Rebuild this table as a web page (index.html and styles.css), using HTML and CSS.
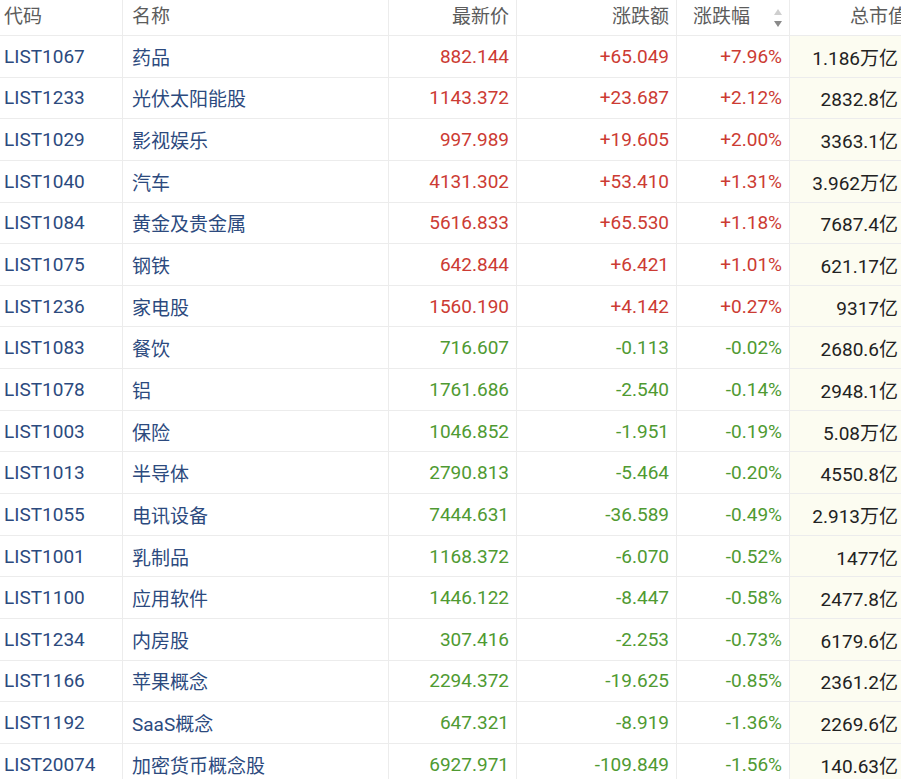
FILE: index.html
```html
<!DOCTYPE html>
<html lang="zh-CN">
<head>
<meta charset="utf-8">
<title>板块行情</title>
<link rel="stylesheet" href="styles.css">
</head>
<body>
<table class="quotes">
  <colgroup>
    <col class="c-code"><col class="c-name"><col class="c-price"><col class="c-chg"><col class="c-pct"><col class="c-cap">
  </colgroup>
  <thead>
    <tr>
      <th class="left">代码</th>
      <th class="left">名称</th>
      <th>最新价</th>
      <th>涨跌额</th>
      <th class="sorted"><span class="th-inner">涨跌幅<span class="sort"><span class="up"></span><span class="down"></span></span></span></th>
      <th class="cap-h">总市值</th>
    </tr>
  </thead>
  <tbody>
    <tr class="rise"><td class="code">LIST1067</td><td class="name">药品</td><td class="num">882.144</td><td class="num">+65.049</td><td class="num">+7.96%</td><td class="cap">1.186万亿</td></tr>
    <tr class="rise"><td class="code">LIST1233</td><td class="name">光伏太阳能股</td><td class="num">1143.372</td><td class="num">+23.687</td><td class="num">+2.12%</td><td class="cap">2832.8亿</td></tr>
    <tr class="rise"><td class="code">LIST1029</td><td class="name">影视娱乐</td><td class="num">997.989</td><td class="num">+19.605</td><td class="num">+2.00%</td><td class="cap">3363.1亿</td></tr>
    <tr class="rise"><td class="code">LIST1040</td><td class="name">汽车</td><td class="num">4131.302</td><td class="num">+53.410</td><td class="num">+1.31%</td><td class="cap">3.962万亿</td></tr>
    <tr class="rise"><td class="code">LIST1084</td><td class="name">黄金及贵金属</td><td class="num">5616.833</td><td class="num">+65.530</td><td class="num">+1.18%</td><td class="cap">7687.4亿</td></tr>
    <tr class="rise"><td class="code">LIST1075</td><td class="name">钢铁</td><td class="num">642.844</td><td class="num">+6.421</td><td class="num">+1.01%</td><td class="cap">621.17亿</td></tr>
    <tr class="rise"><td class="code">LIST1236</td><td class="name">家电股</td><td class="num">1560.190</td><td class="num">+4.142</td><td class="num">+0.27%</td><td class="cap">9317亿</td></tr>
    <tr class="fall"><td class="code">LIST1083</td><td class="name">餐饮</td><td class="num">716.607</td><td class="num">-0.113</td><td class="num">-0.02%</td><td class="cap">2680.6亿</td></tr>
    <tr class="fall"><td class="code">LIST1078</td><td class="name">铝</td><td class="num">1761.686</td><td class="num">-2.540</td><td class="num">-0.14%</td><td class="cap">2948.1亿</td></tr>
    <tr class="fall"><td class="code">LIST1003</td><td class="name">保险</td><td class="num">1046.852</td><td class="num">-1.951</td><td class="num">-0.19%</td><td class="cap">5.08万亿</td></tr>
    <tr class="fall"><td class="code">LIST1013</td><td class="name">半导体</td><td class="num">2790.813</td><td class="num">-5.464</td><td class="num">-0.20%</td><td class="cap">4550.8亿</td></tr>
    <tr class="fall"><td class="code">LIST1055</td><td class="name">电讯设备</td><td class="num">7444.631</td><td class="num">-36.589</td><td class="num">-0.49%</td><td class="cap">2.913万亿</td></tr>
    <tr class="fall"><td class="code">LIST1001</td><td class="name">乳制品</td><td class="num">1168.372</td><td class="num">-6.070</td><td class="num">-0.52%</td><td class="cap">1477亿</td></tr>
    <tr class="fall"><td class="code">LIST1100</td><td class="name">应用软件</td><td class="num">1446.122</td><td class="num">-8.447</td><td class="num">-0.58%</td><td class="cap">2477.8亿</td></tr>
    <tr class="fall"><td class="code">LIST1234</td><td class="name">内房股</td><td class="num">307.416</td><td class="num">-2.253</td><td class="num">-0.73%</td><td class="cap">6179.6亿</td></tr>
    <tr class="fall"><td class="code">LIST1166</td><td class="name">苹果概念</td><td class="num">2294.372</td><td class="num">-19.625</td><td class="num">-0.85%</td><td class="cap">2361.2亿</td></tr>
    <tr class="fall"><td class="code">LIST1192</td><td class="name">SaaS概念</td><td class="num">647.321</td><td class="num">-8.919</td><td class="num">-1.36%</td><td class="cap">2269.6亿</td></tr>
    <tr class="fall"><td class="code">LIST20074</td><td class="name">加密货币概念股</td><td class="num">6927.971</td><td class="num">-109.849</td><td class="num">-1.56%</td><td class="cap">140.63亿</td></tr>
  </tbody>
</table>
</body>
</html>
```

FILE: styles.css
```css
html, body {
  margin: 0;
  padding: 0;
  background: #ffffff;
  overflow: hidden;
}

body {
  width: 901px;
  height: 779px;
  font-family: "Roboto", "Noto Sans CJK SC", sans-serif;
  font-size: 19px;
}

.quotes {
  table-layout: fixed;
  border-collapse: separate;
  border-spacing: 0;
  width: 908px;
}

.c-code { width: 123px; }
.c-name { width: 266px; }
.c-price { width: 128px; }
.c-chg { width: 160px; }
.c-pct { width: 113px; }
.c-cap { width: 118px; }

.quotes th,
.quotes td {
  box-sizing: border-box;
  border-right: 1px solid #ececec;
  border-bottom: 1px solid #ececec;
  white-space: nowrap;
  overflow: visible;
}

.quotes th {
  height: 36px;
  padding: 0 7px 6px 4px;
  font-weight: normal;
  color: #5c5c5c;
  text-align: right;
  vertical-align: middle;
}

.quotes th.left { text-align: left; }
.quotes th:nth-child(2) { padding-left: 9px; }

.th-inner {
  display: inline-flex;
  align-items: center;
  gap: 24px;
}

.sort {
  display: inline-flex;
  flex-direction: column;
  gap: 6px;
  margin-top: 6px;
}

.sort .up {
  width: 0;
  height: 0;
  border-left: 4px solid transparent;
  border-right: 4px solid transparent;
  border-bottom: 6px solid #cfcfcf;
}

.sort .down {
  width: 0;
  height: 0;
  border-left: 4px solid transparent;
  border-right: 4px solid transparent;
  border-top: 6px solid #8a8a8a;
}

.quotes th.cap-h {
  padding-right: 0;
  background: #ffffff;
}

.quotes td {
  height: 41.65px;
  padding: 0 7px 0 4px;
  vertical-align: middle;
}

.quotes td.code {
  color: #2c4a7e;
  text-align: left;
}

.quotes td.name {
  color: #2c4a7e;
  padding-left: 9px;
  text-align: left;
}

.quotes td.num { text-align: right; }

.rise td.num { color: #cc3b33; }
.fall td.num { color: #4f9a32; }

.quotes td.cap {
  color: #222222;
  text-align: right;
  padding-right: 9px;
  background: #fcfcf1;
}
```
